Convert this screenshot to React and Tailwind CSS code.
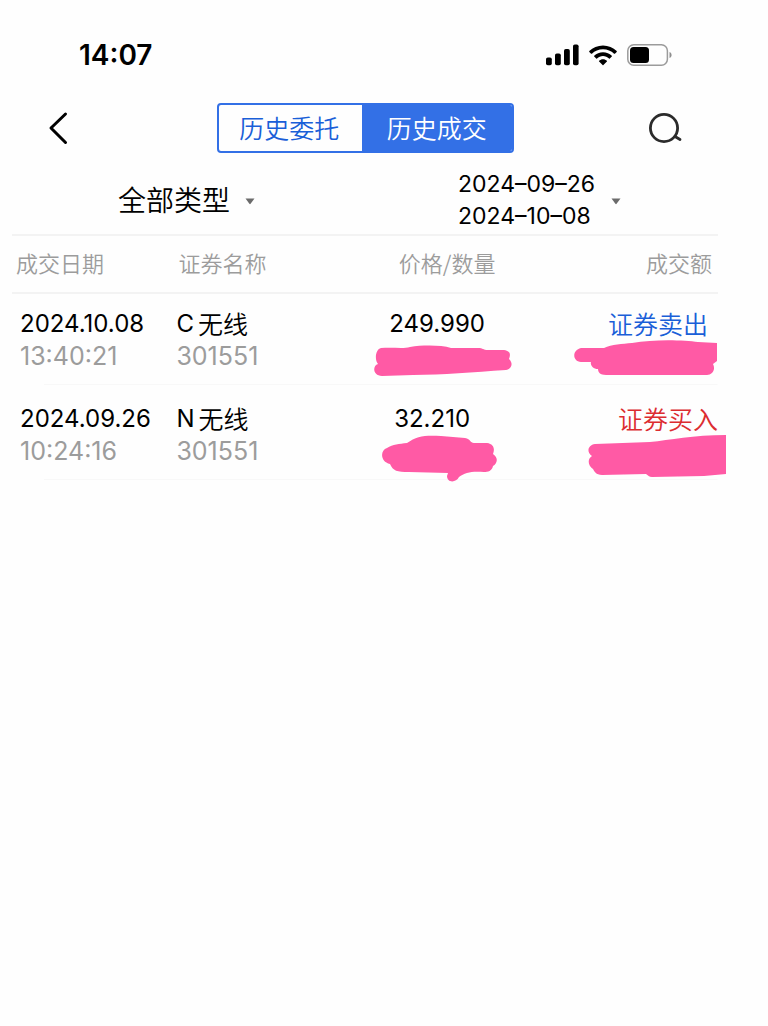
const latin = "font-['Inter','Noto_Sans_CJK_SC',sans-serif]";
const cjk = "font-['Noto_Sans_CJK_SC',sans-serif] font-[350]";

const trades = [
  {
    date: "2024.10.08",
    time: "13:40:21",
    prefix: "C",
    name: "无线",
    code: "301551",
    price: "249.990",
    side: "证券卖出",
    sideClass: "text-[#1a5fd8]",
    rowPad: "pt-[13px] pb-3",
    pricePad: "pr-1",
    sidePad: "pr-[10px]",
    priceMark: {
      box: "left-9 top-[51px] h-8 w-[140px]",
      viewBox: "0 0 140 32",
      d: "M8 3C20 2 30 4 37 2C50 0 68 0 78 3L104 3C112 3 108 5 116 5L131 5C137 6 138 9 136 14C141 19 138 24 133 25C100 27 70 30 40 30L9 31C0 31-1 21 5 19C1 14 3 4 8 3Z",
    },
    sideMark: {
      box: "right-px top-[46px] h-9 w-[143px]",
      viewBox: "0 0 143 36",
      d: "M7 8L30 8C38 4 48 4 58 3C80-1 110 0 124 2L143 3L143 21L139 24C142 30 138 35 133 35L32 35C26 35 24 32 24 29C19 29 16 25 17 22L7 22C-2 21-2 10 7 8Z",
    },
  },
  {
    date: "2024.09.26",
    time: "10:24:16",
    prefix: "N",
    name: "无线",
    code: "301551",
    price: "32.210",
    side: "证券买入",
    sideClass: "text-[#dc2c30]",
    rowPad: "pt-[17px] pb-3",
    pricePad: "pr-[14px]",
    sidePad: "pr-0",
    priceMark: {
      box: "left-11 top-[50px] h-[47px] w-[116px]",
      viewBox: "0 0 116 47",
      d: "M26 8C36 1 44 0 60 1L84 3C90 4 89 8 93 8L106 8C113 9 114 14 112 19C118 23 116 29 112 31C111 36 107 37 103 37C92 36 84 37 78 42C75 48 66 48 66 41L67 38L28 37C16 37 12 36 9 29C-1 27-1 15 6 13C12 9 18 9 26 8Z",
    },
    sideMark: {
      box: "-right-2 top-[50px] h-[43px] w-[138px]",
      viewBox: "0 0 138 43",
      d: "M7 9L62 7C82 5 105 0 138 0L138 39L116 41L64 42C61 42 60 40 58 39L14 40C8 40 6 36 5 34C0 31-1 24 4 21C-2 17 0 10 7 9Z",
    },
  },
];

function Mark({ box, viewBox, d }) {
  return (
    <svg className={`absolute text-[#ff5aa5] ${box}`} viewBox={viewBox} aria-hidden="true">
      <path d={d} fill="currentColor" />
    </svg>
  );
}

function Caret() {
  return (
    <svg className="h-[7px] w-[10px] text-[#6b6b6b]" viewBox="0 0 10 7" aria-hidden="true">
      <path d="M0.5 0.5H9.5L5.6 5.8Q5 6.5 4.4 5.8Z" fill="currentColor" />
    </svg>
  );
}

function StatusBar() {
  return (
    <div className="flex h-[54px] items-center justify-between pl-[79px] pr-24">
      <span className={`text-[28px] font-semibold leading-8 ${latin}`}>14:07</span>
      <div className="flex items-center">
        <svg className="h-[22px] w-[33px]" viewBox="0 0 33 22" aria-hidden="true">
          <rect x="0" y="13.5" width="5.8" height="7.8" rx="1.8" />
          <rect x="9" y="9.5" width="5.8" height="11.8" rx="1.8" />
          <rect x="18" y="5" width="5.8" height="16.3" rx="1.8" />
          <rect x="27" y="0.5" width="5.6" height="20.8" rx="1.8" />
        </svg>
        <svg className="ml-[10px] h-[21px] w-7" viewBox="0 0 28 21" aria-hidden="true">
          <path d="M14 0.5C19.3 0.5 24.2 2.6 27.7 6.1Q28 6.5 27.7 6.9L25.9 8.7Q25.5 9 25.1 8.7C22.2 5.9 18.3 4.3 14 4.3S5.8 5.9 2.9 8.7Q2.5 9 2.1 8.7L0.3 6.9Q0 6.5 0.3 6.1C3.8 2.6 8.7 0.5 14 0.5Z" />
          <path d="M14 7.3C17.4 7.3 20.5 8.6 22.8 10.8Q23.2 11.2 22.8 11.6L20.8 13.5Q20.4 13.9 20 13.5C18.4 12 16.3 11.1 14 11.1S9.6 12 8 13.5Q7.6 13.9 7.2 13.5L5.2 11.6Q4.8 11.2 5.2 10.8C7.5 8.6 10.6 7.3 14 7.3Z" />
          <path d="M14 14.2C15.5 14.2 16.9 14.8 17.9 15.7Q18.3 16.1 17.9 16.5L14.4 20.1Q14 20.5 13.6 20.1L10.1 16.5Q9.7 16.1 10.1 15.7C11.1 14.8 12.5 14.2 14 14.2Z" />
        </svg>
        <svg className="ml-[10px] h-[22px] w-[45px]" viewBox="0 0 45 22" aria-hidden="true">
          <rect x="0.8" y="0.8" width="39.6" height="20.4" rx="6" fill="none" stroke="#9b9b9b" strokeWidth="1.5" />
          <rect x="3" y="3" width="19" height="16" rx="3.5" />
          <path d="M42.5 8C45.3 9 45.3 13 42.5 14Z" fill="#8f8f8f" />
        </svg>
      </div>
    </div>
  );
}

function NavBar() {
  return (
    <header className="flex items-center justify-between pl-12 pr-[85px]">
      <button type="button" aria-label="返回" className="w-[116px]">
        <svg className="h-[34px] w-5" viewBox="0 0 20 34" fill="none" stroke="#000" strokeWidth="3" strokeLinecap="round" strokeLinejoin="round" aria-hidden="true">
          <path d="M17.5 3L3 17L17.5 31.5" />
        </svg>
      </button>
      <div role="tablist" className={`flex h-[50px] w-[297px] overflow-hidden rounded-[4px] border-2 border-[#3370e6] text-[25px] ${cjk}`}>
        <button type="button" role="tab" aria-selected="false" className="w-[49%] pb-[2px] pr-[2px] leading-9 text-[#1a5fd8]">
          历史委托
        </button>
        <button type="button" role="tab" aria-selected="true" className="flex-1 bg-[#3370e6] pb-[2px] leading-9 text-white">
          历史成交
        </button>
      </div>
      <button type="button" aria-label="搜索" className="flex w-[117px] justify-end">
        <svg className="h-8 w-9" viewBox="0 0 36 32" fill="none" stroke="#2b2b2b" strokeWidth="2.8" strokeLinecap="round" aria-hidden="true">
          <circle cx="17" cy="16" r="13.6" />
          <path d="M28 24.5L33 27.5" />
        </svg>
      </button>
    </header>
  );
}

function Filters() {
  return (
    <div className="flex h-[81px] items-center justify-between pl-[106px] pr-[97px] pt-3">
      <div className="flex items-center">
        <select aria-label="类型" defaultValue="all" className={`appearance-none bg-transparent pb-[2px] text-[28px] leading-10 text-black ${cjk}`}>
          <option value="all">全部类型</option>
        </select>
        <span className="ml-[14px] pt-1">
          <Caret />
        </span>
      </div>
      <button type="button" className={`flex items-center text-left text-[23px] leading-8 ${latin}`}>
        <span className="w-[153px]">
          2024–09–26
          <br />
          2024–10–08
        </span>
        <span className="pt-1">
          <Caret />
        </span>
      </button>
    </div>
  );
}

export default function App() {
  return (
    <div className="min-h-screen bg-[#fefefe] pt-7 text-black">
      <StatusBar />
      <div className="pt-[21px]">
        <NavBar />
      </div>
      <main className="pl-3 pr-[50px]">
        <Filters />
        <table className="w-full table-fixed border-collapse">
          <thead>
            <tr className={`border-y-2 border-[#f3f3f3] text-left text-[22px] leading-8 text-[#9c9c9c] ${cjk}`}>
              <th className="h-[58px] w-[23%] pb-1 pl-1 font-[350]">成交日期</th>
              <th className="w-[23%] pb-1 pl-1 font-[350]">证券名称</th>
              <th className="w-[29%] pb-1 pl-4 text-center font-[350]">价格/数量</th>
              <th className="pb-1 pr-[6px] text-right font-[350]">成交额</th>
            </tr>
          </thead>
          <tbody className={`text-2xl ${latin}`}>
            {trades.map((t) => (
              <tr key={t.date} className="bg-[linear-gradient(#f8f8f8,#f8f8f8)] bg-[length:calc(100%-32px)_1px] bg-[position:100%_100%] bg-no-repeat align-top">
                <td className={`pl-2 leading-[33px] ${t.rowPad}`}>
                  <div className="leading-[33px]">{t.date}</div>
                  <div className="text-[25px] leading-[33px] text-[#9c9c9c]">{t.time}</div>
                </td>
                <td className={`pl-[2px] leading-[33px] ${t.rowPad}`}>
                  <div className="flex gap-1">
                    <span>{t.prefix}</span>
                    <span className={`text-[25px] leading-[33px] ${cjk}`}>{t.name}</span>
                  </div>
                  <div className="text-[25px] leading-[33px] text-[#9c9c9c]">{t.code}</div>
                </td>
                <td className={`relative text-center leading-[33px] ${t.rowPad} ${t.pricePad}`}>
                  {t.price}
                  <Mark {...t.priceMark} />
                </td>
                <td className={`relative text-right text-[25px] leading-[33px] ${cjk} ${t.sideClass} ${t.rowPad} ${t.sidePad}`}>
                  {t.side}
                  <Mark {...t.sideMark} />
                </td>
              </tr>
            ))}
          </tbody>
        </table>
      </main>
    </div>
  );
}
